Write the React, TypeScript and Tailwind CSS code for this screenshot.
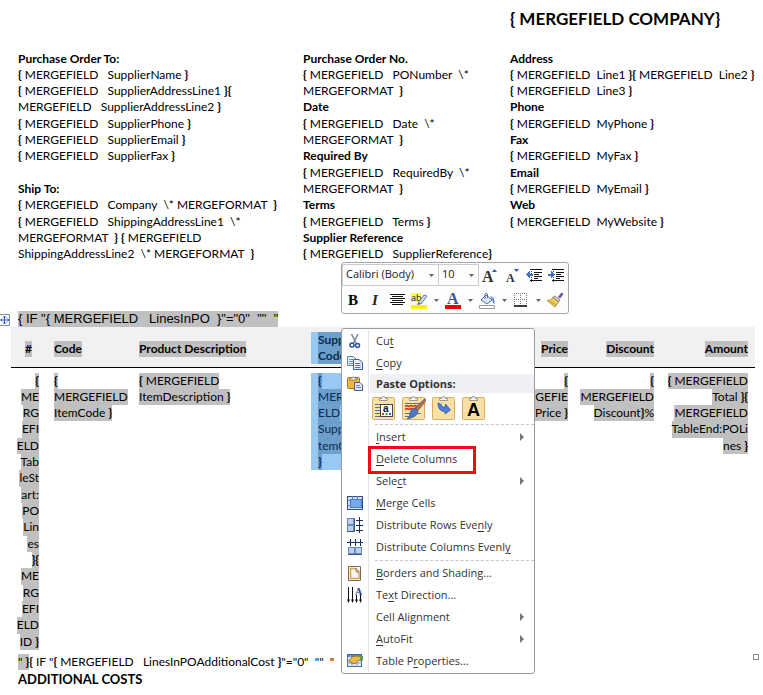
import type { ReactNode } from 'react'
import clsx from 'clsx'

const supplierLines = [
  '*Purchase Order To:',
  '{ MERGEFIELD   SupplierName }',
  '{ MERGEFIELD   SupplierAddressLine1 }{',
  'MERGEFIELD   SupplierAddressLine2 }',
  '{ MERGEFIELD   SupplierPhone }',
  '{ MERGEFIELD   SupplierEmail }',
  '{ MERGEFIELD   SupplierFax }',
  '',
  '*Ship To:',
  '{ MERGEFIELD   Company  \\* MERGEFORMAT  }',
  '{ MERGEFIELD   ShippingAddressLine1  \\*',
  'MERGEFORMAT  } { MERGEFIELD',
  'ShippingAddressLine2  \\* MERGEFORMAT  }',
]

const orderLines = [
  '*Purchase Order No.',
  '{ MERGEFIELD   PONumber  \\*',
  'MERGEFORMAT  }',
  '*Date',
  '{ MERGEFIELD   Date  \\*',
  'MERGEFORMAT  }',
  '*Required By',
  '{ MERGEFIELD   RequiredBy  \\*',
  'MERGEFORMAT  }',
  '*Terms',
  '{ MERGEFIELD   Terms }',
  '*Supplier Reference',
  '{ MERGEFIELD   SupplierReference}',
]

const companyLines = [
  '*Address',
  '{ MERGEFIELD  Line1 }{ MERGEFIELD  Line2 }',
  '{ MERGEFIELD  Line3 }',
  '*Phone',
  '{ MERGEFIELD  MyPhone }',
  '*Fax',
  '{ MERGEFIELD  MyFax }',
  '*Email',
  '{ MERGEFIELD  MyEmail }',
  '*Web',
  '{ MERGEFIELD  MyWebsite }',
]

const rowNumberLines = [
  '{', 'ME', 'RG', 'EFI', 'ELD', 'Tab', 'leSt', 'art:', 'PO', 'Lin', 'es', '}{', 'ME', 'RG', 'EFI', 'ELD', 'ID }',
]

// Field braces are always bold
function Runs({ text }: { text: string }) {
  return (
    <>
      {text.split(/([{}]+)/).map((part, i) =>
        /[{}]/.test(part) ? <b key={i}>{part}</b> : part
      )}
    </>
  )
}

// A leading * marks a heading line
function Block({ lines }: { lines: string[] }) {
  return (
    <div className="whitespace-pre">
      {lines.map((line, i) => (
        <p key={i} className="h-4 leading-4 nth-[3n+4]:h-[17px]">
          {line.startsWith('*') ? <b>{line.slice(1)}</b> : <Runs text={line} />}
        </p>
      ))}
    </div>
  )
}

function Shaded({ lines, right }: { lines: string[]; right?: boolean }) {
  return (
    <div className={clsx('flex flex-col whitespace-pre', right ? 'items-end' : 'items-start')}>
      {lines.map((line, i) => (
        <span key={i} className="h-4 bg-[#c0c0c0] leading-4 nth-[3n+4]:h-[17px]">
          <Runs text={line} />
        </span>
      ))}
    </div>
  )
}

function Selected({ lines }: { lines: string[] }) {
  return (
    <div className="flex flex-col items-start bg-[#99c9f3] pl-[7px] whitespace-pre text-[#0b2c50]">
      {lines.map((line, i) => (
        <span key={i} className="h-4 bg-[#6c9fcc] leading-4 nth-[3n+4]:h-[17px]">
          <Runs text={line} />
        </span>
      ))}
    </div>
  )
}

function Caret() {
  return (
    <svg width="5" height="3" viewBox="0 0 5 3">
      <path d="M0 0h5L2.5 3z" fill="#666" />
    </svg>
  )
}

function Combo({ label, value, className }: { label: string; value: string; className: string }) {
  return (
    <label className={clsx('grid items-center border border-[#c9cdd2]', className)}>
      <select aria-label={label} className="col-start-1 row-start-1 h-5 w-full appearance-none bg-transparent pb-0.5 pl-[3px] outline-none">
        <option>{value}</option>
      </select>
      <span className="pointer-events-none col-start-1 row-start-1 mr-1 justify-self-end">
        <Caret />
      </span>
    </label>
  )
}

function Tool({ label, children }: { label: string; children: ReactNode }) {
  return (
    <button type="button" aria-label={label} className="flex h-6 w-[22px] items-center justify-center">
      {children}
    </button>
  )
}

function More({ label }: { label: string }) {
  return (
    <button type="button" aria-label={label} className="flex h-6 w-3 items-center justify-center">
      <Caret />
    </button>
  )
}

function IndentIcon({ flip }: { flip?: boolean }) {
  return (
    <svg width="17" height="16" viewBox="0 0 17 16" shapeRendering="crispEdges">
      <path d="M4 1.500h12M8 4.500h8M8 6.500h5M8 8.500h8M8 10.500h4M4 12.500h12" stroke="#111" />
      <path d="M5.500 1v14" stroke="#333" strokeDasharray="1 1" />
      <path d={flip ? 'M0 6h3V3l4 3.500L3 10V8H0z' : 'M7 6H4V3L0 6.500 4 10V8h3z'} fill="#3f6fc4" />
    </svg>
  )
}

function MiniToolbar() {
  return (
    <div
      role="toolbar"
      aria-label="Formatting"
      className="absolute top-[262px] left-[341px] w-[228px] rounded-[3px] border border-[#a4a8ac] bg-[#fdfdfe] pt-px pb-px font-['Open_Sans',sans-serif] text-[11px] text-[#222]"
    >
      <div className="flex items-start">
        <Combo label="Font" value="Calibri (Body)" className="w-[97px]" />
        <Combo label="Font size" value="10" className="-ml-px w-[41px]" />
        <Tool label="Grow font">
          <svg width="16" height="22" viewBox="0 -3 16 22">
            <text x="0" y="14" fontSize="16" fontWeight="700" fontFamily="Liberation Serif" fill="#333">A</text>
            <path d="M10 4l2.5-3L15 4z" fill="#2f5aa8" />
          </svg>
        </Tool>
        <Tool label="Shrink font">
          <svg width="16" height="22" viewBox="0 -3 16 22">
            <text x="2" y="14" fontSize="12" fontWeight="700" fontFamily="Liberation Serif" fill="#333">A</text>
            <path d="M10 1h5l-2.5 3z" fill="#2f5aa8" />
          </svg>
        </Tool>
        <Tool label="Decrease indent"><IndentIcon /></Tool>
        <Tool label="Increase indent"><IndentIcon flip /></Tool>
      </div>
      <div className="flex items-center">
        <Tool label="Bold">
          <span className="font-['Liberation_Serif',serif] text-[15px] font-bold text-black">B</span>
        </Tool>
        <Tool label="Italic">
          <span className="font-['Liberation_Serif',serif] text-[15px] font-bold text-[#222] italic">I</span>
        </Tool>
        <Tool label="Center">
          <svg width="15" height="12" viewBox="0 0 15 12" shapeRendering="crispEdges">
            <path d="M0 .5h15M2 2.5h11M0 4.5h15M2 6.5h11M0 8.5h15M2 10.5h11" stroke="#111" />
          </svg>
        </Tool>
        <Tool label="Text highlight colour">
          <svg width="17" height="23" viewBox="0 -3 17 23">
            <path d="M0 1h10v9H0z" fill="#fdf85a" />
            <text x="0" y="9" fontSize="9" fontFamily="Open Sans" fill="#111">ab</text>
            <path d="M7 11l6-8 3 1-6 8z" fill="#cfdcec" stroke="#4e6a94" strokeWidth=".9" />
            <path d="M7 11l3 1-4 1z" fill="#555" />
            <path d="M0 13h16v4H0z" fill="#fff200" />
          </svg>
        </Tool>
        <More label="More highlight colours" />
        <Tool label="Font colour">
          <svg width="17" height="23" viewBox="0 -3 17 23">
            <text x="2" y="12" fontSize="16" fontWeight="700" fontFamily="Liberation Serif" fill="#35558f">A</text>
            <path d="M0 13h16v4H0z" fill="#f00000" />
          </svg>
        </Tool>
        <More label="More font colours" />
        <Tool label="Shading">
          <svg width="17" height="17" viewBox="0 0 17 17">
            <path d="M2 8l5-5 6 5-5 4z" fill="#dce6f2" stroke="#51709c" />
            <path d="M6 7V2q1-2 2.5 0v4" fill="none" stroke="#51709c" />
            <path d="M11 4q5 1 4.500 8-2-1-2-4z" fill="#4a7ac4" />
            <path d="M.5 13.500h15v3H.5z" fill="#fff" stroke="#999" />
          </svg>
        </Tool>
        <More label="More shading" />
        <Tool label="Borders">
          <svg width="14" height="14" viewBox="0 0 14 14">
            <path d="M0 .5h13M0 6.500h13M.5 0v13M6.500 0v13M12.500 0v13" stroke="#777" strokeDasharray="1 1" />
            <path d="M0 13h13" stroke="#000" strokeWidth="1.500" />
          </svg>
        </Tool>
        <More label="More borders" />
        <Tool label="Format painter">
          <svg width="17" height="16" viewBox="0 0 17 16">
            <path d="M11 5l3.500-4.500L16.500 2 13 6.500z" fill="#6b4fa0" />
            <path d="M8 4l5 4-1.500 2-6-4.500z" fill="#c8ccd4" stroke="#666" strokeWidth=".7" />
            <path d="M6 5.500l5.500 4.500L8 15 0 8.500q4 0 6-3z" fill="#f0cf57" stroke="#a47f1c" strokeWidth=".8" />
            <path d="M3 9l6 4" stroke="#a47f1c" strokeWidth=".7" />
          </svg>
        </Tool>
      </div>
    </div>
  )
}

const CutIcon = (
  <svg width="12" height="15" viewBox="0 0 12 15">
    <path d="M2.500 0L7 9M9 0L4.500 9" stroke="#7a8ba8" strokeWidth="1.600" />
    <circle cx="3" cy="11" r="2" fill="none" stroke="#2b56a8" strokeWidth="1.600" />
    <circle cx="8.500" cy="11.500" r="2" fill="none" stroke="#2b56a8" strokeWidth="1.600" />
  </svg>
)

const CopyIcon = (
  <svg width="16" height="14" viewBox="0 0 16 14">
    <path d="M.5.5h6l3 3v6h-9z" fill="#e6effb" stroke="#5a82c0" />
    <path d="M2 3.500h4M2 5.500h4M2 7.500h4" stroke="#6c92cc" />
    <path d="M6.500 3.500h5.500l3.500 3v7h-9z" fill="#e6effb" stroke="#2f5fae" />
    <path d="M8 7.500h5.500M8 9.500h5.500M8 11.500h5.500" stroke="#4c7cc6" />
  </svg>
)

const PasteIcon = (
  <svg width="16" height="15" viewBox="0 0 16 15">
    <rect x=".5" y="1.500" width="12" height="11" rx="1" fill="#eeb63e" stroke="#a8781c" />
    <path d="M3 4V2h2q1-2.500 3 0h2v2z" fill="#f7f0dc" stroke="#6e6e6e" strokeWidth=".8" />
    <path d="M7.500 6.500h5.500l2.500 2.500v5.500h-8z" fill="#dfe9f7" stroke="#4a5c7c" />
    <path d="M9 9.500h4M9 11.500h5" stroke="#6c86b0" />
  </svg>
)

const MergeIcon = (
  <svg width="16" height="14" viewBox="0 0 16 14">
    <rect x=".5" y=".5" width="15" height="13" fill="#cfe0f8" stroke="#2c4f8c" />
    <path d="M5.500 0v3M10.500 0v3M0 4.500h3M0 9.500h3" stroke="#5d7cb0" />
    <rect x="3.500" y="3.500" width="11" height="8" fill="#79a8f2" stroke="#4c7cd0" />
  </svg>
)

const RowsIcon = (
  <svg width="16" height="16" viewBox="0 0 16 16" shapeRendering="crispEdges">
    <rect x=".5" y="1.500" width="6" height="6" fill="#b9d0ee" stroke="#6f8ab5" />
    <rect x=".5" y="8.500" width="6" height="6" fill="#b9d0ee" stroke="#6f8ab5" />
    <path d="M7.500 1v14M0 14.500h8" stroke="#3a578a" />
    <path d="M12.500 0v16M9 3.500h7M9 8.500h7M9 13.500h7" stroke="#0f2f68" />
  </svg>
)

const ColumnsIcon = (
  <svg width="16" height="16" viewBox="0 0 16 16" shapeRendering="crispEdges">
    <rect x="1.500" y="8.500" width="6" height="6" fill="#b9d0ee" stroke="#6f8ab5" />
    <rect x="8.500" y="8.500" width="6" height="6" fill="#b9d0ee" stroke="#6f8ab5" />
    <path d="M1 15.500h14" stroke="#3a578a" />
    <path d="M0 3.500h16M3.500 0v7M8.500 0v7M13.500 0v7" stroke="#0f2f68" />
  </svg>
)

const BordersIcon = (
  <svg width="14" height="15" viewBox="0 0 14 15">
    <path d="M.5.5h12v14H.5z" fill="#fff" stroke="#7b6a5a" />
    <path d="M2.500 2.500h5.500l3 3v7H2.500z" fill="#f5f6fa" stroke="#e0a040" strokeWidth="1.500" />
    <path d="M8 2v4h3" fill="none" stroke="#8a8078" />
  </svg>
)

const DirectionIcon = (
  <svg width="16" height="18" viewBox="0 -1 16 18">
    <path d="M1.500 0v14M5.500 0v14M9.500 8v6M13.500 8v6" stroke="#111" />
    <path d="M0 12.500h3L1.500 16zM4 12.500h3L5.500 16zM8 12.500h3L9.500 16zM12 12.500h3L13.500 16z" fill="#111" />
    <text x="8" y="8" fontSize="10" fontWeight="700" fontFamily="Liberation Serif" fill="#2b3f86">A</text>
  </svg>
)

const PropertiesIcon = (
  <svg width="16" height="14" viewBox="0 0 16 14">
    <rect x=".5" y=".5" width="14" height="12" fill="#e3edfa" stroke="#44689f" />
    <path d="M1 1h13v2H1z" fill="#5d8cd8" />
    <path d="M0 9h15M5 4v9M10 4v9" stroke="#7d9cc8" />
    <path d="M1.500 7l4-4.500 4-.5 6.500.5v3.500l-5 .5-3.500 3.500z" fill="#eebb45" stroke="#7d6220" strokeWidth=".8" />
    <path d="M13 2h3v4h-3z" fill="#5a9b48" />
  </svg>
)

type Item = { label: string; hot: number; icon?: ReactNode; submenu?: boolean; marked?: boolean }

// hot is the index of the access-key letter
const clipboardItems: Item[] = [
  { label: 'Cut', hot: 2, icon: CutIcon },
  { label: 'Copy', hot: 0, icon: CopyIcon },
]

const tableItems: Item[] = [
  { label: 'Insert', hot: 0, submenu: true },
  { label: 'Delete Columns', hot: 0, marked: true },
  { label: 'Select', hot: 4, submenu: true },
  { label: 'Merge Cells', hot: 0, icon: MergeIcon },
  { label: 'Distribute Rows Evenly', hot: 19, icon: RowsIcon },
  { label: 'Distribute Columns Evenly', hot: 24, icon: ColumnsIcon },
]

const formatItems: Item[] = [
  { label: 'Borders and Shading...', hot: 0, icon: BordersIcon },
  { label: 'Text Direction...', hot: 2, icon: DirectionIcon },
  { label: 'Cell Alignment', hot: 8, submenu: true },
  { label: 'AutoFit', hot: 0, submenu: true },
  { label: 'Table Properties...', hot: 7, icon: PropertiesIcon },
]

function MenuItems({ items }: { items: Item[] }) {
  return (
    <>
      {items.map(({ label, hot, icon, submenu, marked }) => (
        <div key={label} className="relative">
          <button type="button" role="menuitem" className="flex h-[22px] w-full items-center text-left">
            <span className="flex w-[26px] shrink-0 justify-center">{icon}</span>
            <span className="flex-1 pl-2 whitespace-pre">
              {label.slice(0, hot)}
              <span className="underline underline-offset-2">{label[hot]}</span>
              {label.slice(hot + 1)}
            </span>
            {submenu && (
              <svg width="4" height="8" viewBox="0 0 4 8" className="mr-[10px]">
                <path d="M0 0l4 4-4 4z" fill="#777" />
              </svg>
            )}
          </button>
          {marked && <div className="pointer-events-none absolute -top-0.5 left-[26px] h-7 w-[108px] border-3 border-[#ec0c18]" />}
        </div>
      ))}
    </>
  )
}

function Separator() {
  return (
    <div className="flex h-1 items-center pl-[33px]">
      <div className="w-full border-t border-dashed border-[#c4c6c8]" />
    </div>
  )
}

function PasteOption({ label, children }: { label: string; children: ReactNode }) {
  return (
    <button type="button" aria-label={label}>
      <svg width="24" height="24" viewBox="0 0 24 24">
        <rect x=".5" y="1.500" width="22" height="22" rx="1" fill="#fbe0a6" stroke="#d9ad5d" />
        <path d="M7.500 4.500v-2h2q0-2 2-2t2 2h2v2z" fill="#f4f4f4" stroke="#9a9a9a" />
        {children}
      </svg>
    </button>
  )
}

function ContextMenu() {
  return (
    <div
      role="menu"
      className="absolute top-[328px] left-[341px] w-[194px] rounded-[3px] border border-[#989ca0] bg-white pt-px pb-px font-['Open_Sans',sans-serif] text-[11px] text-[#333]"
    >
      <div className="bg-[linear-gradient(to_right,transparent_26px,#e2e4e7_26px,#e2e4e7_27px,transparent_27px)]">
        <MenuItems items={clipboardItems} />
        <div className="flex h-[19px] items-center">
          <span className="flex w-[26px] justify-center">{PasteIcon}</span>
          <span className="ml-0.5 flex-1 bg-[#eff0f4] pl-1.5 leading-[19px] font-bold">Paste Options:</span>
        </div>
        <div className="flex h-[29px] items-center gap-1.5 pl-[30px]">
          <PasteOption label="Use destination styles">
            <path d="M3 8.500h17M3 11.500h5M3 14.500h5M3 17.500h5M3 20.500h17" stroke="#5d6f94" />
            <rect x="8.500" y="8.500" width="12" height="12" fill="#fff" stroke="#444" />
            <text x="11" y="16" fontSize="10" fontWeight="700" fontFamily="Liberation Sans" fill="#111">a</text>
            <path d="M10 17h2v2h-2z" fill="#d33" />
            <path d="M13.500 17h2v2h-2z" fill="#3a3" />
            <path d="M17 17h2v2h-2z" fill="#36c" />
          </PasteOption>
          <PasteOption label="Keep source formatting">
            <path d="M3 7.500h16M3 17.500h16M3 20.500h8" stroke="#5d6f94" />
            <path d="M3 10.500l2-1 2 1 2-1 2 1 2-1 2 1M3 13.500l2-1 2 1 2-1 2 1 2-1" fill="none" stroke="#d22f1e" strokeWidth="1.500" />
            <path d="M23 2.500l1 2-8 10-3-2.500z" fill="#a87658" stroke="#6f4630" strokeWidth=".7" />
            <path d="M12 12l4 3q0 6-11 8 3-2 3-6 1-4 4-5z" fill="#4e78c2" stroke="#34548e" strokeWidth=".7" />
          </PasteOption>
          <PasteOption label="Merge formatting">
            <path d="M6 7q3 0 5 4.500l2.500-1V8l5 6-5.500 4v-2.500q-7 0-7-8.500z" fill="#4b7fdb" stroke="#2c55a0" strokeWidth=".8" />
          </PasteOption>
          <PasteOption label="Keep text only">
            <text x="5" y="20" fontSize="18" fontWeight="700" fontFamily="Liberation Sans" fill="#000">A</text>
          </PasteOption>
        </div>
        <Separator />
        <MenuItems items={tableItems} />
        <Separator />
        <MenuItems items={formatItems} />
      </div>
    </div>
  )
}

function LinesTable() {
  return (
    <table className="w-full table-fixed border-collapse">
      <colgroup>
        <col className="w-[35px]" />
        <col className="w-[85px]" />
        <col className="w-[180px]" />
        <col className="w-[64px]" />
        <col />
        <col className="w-[80px]" />
        <col className="w-[86px]" />
        <col className="w-[94px]" />
      </colgroup>
      <thead>
        <tr className="h-10 border-b border-black bg-[#f1f1f1]">
          <th className="p-0 pt-1"><div className="flex justify-center"><Shaded lines={['#']} /></div></th>
          <th className="p-0 pt-1 pl-2"><Shaded lines={['Code']} /></th>
          <th className="p-0 pt-1 pl-2"><Shaded lines={['Product Description']} /></th>
          <th className="p-0 pt-0.5"><Selected lines={['Supplier', 'Code']} /></th>
          <td />
          <th className="p-0 pt-1 pr-[7px]"><Shaded right lines={['Price']} /></th>
          <th className="p-0 pt-1 pr-[7px]"><Shaded right lines={['Discount']} /></th>
          <th className="p-0 pt-1 pr-[7px]"><Shaded right lines={['Amount']} /></th>
        </tr>
      </thead>
      <tbody>
        <tr className="align-top">
          <td className="pt-[5px] pr-[7px]"><Shaded right lines={rowNumberLines} /></td>
          <td className="pt-[5px] pl-2"><Shaded lines={['{', 'MERGEFIELD', 'ItemCode }']} /></td>
          <td className="pt-[5px] pl-2"><Shaded lines={['{ MERGEFIELD', 'ItemDescription }']} /></td>
          <td className="pt-[5px]"><Selected lines={['{', 'MERGEFI', 'ELD', 'SupplierI', 'temCode', '}']} /></td>
          <td />
          <td className="pt-[5px] pr-[7px]"><Shaded right lines={['{', 'MERGEFIE', 'LD Price }']} /></td>
          <td className="pt-[5px] pr-[7px]"><Shaded right lines={['{', 'MERGEFIELD', 'Discount}%']} /></td>
          <td className="pt-[5px] pr-[7px]">
            <Shaded right lines={['{ MERGEFIELD', 'Total }{', 'MERGEFIELD', 'TableEnd:POLi', 'nes }']} />
          </td>
        </tr>
      </tbody>
    </table>
  )
}

export default function App() {
  return (
    <main className="relative min-h-screen overflow-hidden bg-white pr-2 font-['Lato',sans-serif] text-[12px] text-black">
      <div className="grid grid-cols-[minmax(0,285fr)_minmax(0,207fr)_minmax(0,245fr)] pl-[18px]">
        <h1 className="col-start-3 h-[51px] pt-2 text-[17px] leading-[22px] font-bold whitespace-pre">
          {'{ MERGEFIELD COMPANY}'}
        </h1>
        <Block lines={supplierLines} />
        <Block lines={orderLines} />
        <Block lines={companyLines} />
      </div>

      <div className="mt-12 flex items-end">
        <svg width="11" height="13" viewBox="0 0 11 13" className="mr-[7px]">
          <rect x="-.5" y=".5" width="10" height="11" fill="#fff" stroke="#8a95a8" />
          <path d="M4.500 2v8M1 6h7.500M3 3.500L4.500 2 6 3.500M3 8.500L4.500 10 6 8.500M2 4.500L.5 6 2 7.500M7.500 4.500L9 6 7.500 7.500" fill="none" stroke="#2c55b8" />
        </svg>
        <p className="bg-[#c0c0c0] font-['Liberation_Sans',sans-serif] text-[13px] leading-4 whitespace-pre">
          {'{ IF "{ MERGEFIELD   LinesInPO  }"="0"  ""  "'}
        </p>
      </div>

      <div className="pl-[11px]">
        <LinesTable />
      </div>

      <div className="flex items-start pt-1 pl-[18px]">
        <p className="flex-1 leading-4 whitespace-pre">
          <span className="inline-block bg-[#c0c0c0]"><Runs text={'" }'} /></span>
          <Runs text={'{ IF "{ MERGEFIELD   LinesInPOAdditionalCost }"="0"  ""  "'} />
        </p>
        <span className="-mr-1 size-1.5 border border-[#888]" />
      </div>
      <h2 className="pl-[18px] text-[13px] leading-[18px] font-bold">ADDITIONAL COSTS</h2>

      <MiniToolbar />
      <ContextMenu />
    </main>
  )
}
